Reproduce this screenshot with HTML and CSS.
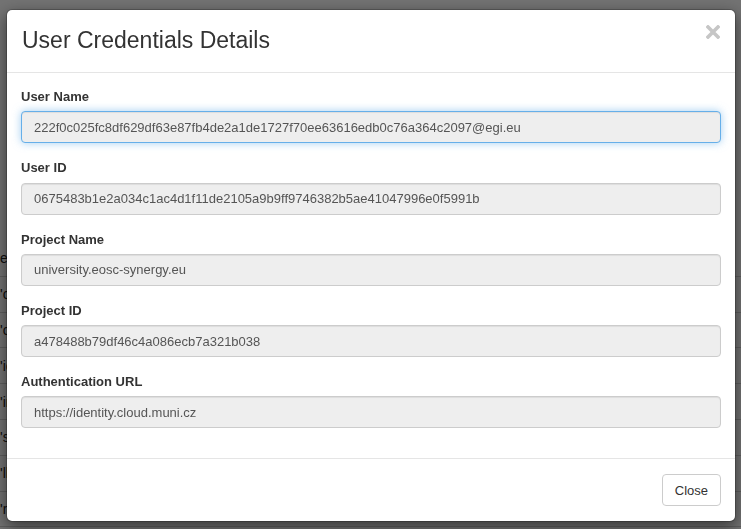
FILE: index.html
```html
<!DOCTYPE html>
<html>
<head>
<meta charset="utf-8">
<link rel="stylesheet" href="styles.css">
</head>
<body>
<div class="page">
  <div class="row"><span class="cell">ex</span></div>
  <div class="row"><span class="cell">'co</span></div>
  <div class="row"><span class="cell">'co</span></div>
  <div class="row"><span class="cell">'ic</span></div>
  <div class="row"><span class="cell">'in</span></div>
  <div class="row"><span class="cell">'st</span></div>
  <div class="row"><span class="cell">'ll</span></div>
  <div class="row"><span class="cell">'ro</span></div>
</div>
<div class="backdrop"></div>
<div class="modal">
  <div class="modal-header">
    <h4 class="modal-title">User Credentials Details</h4>
    <button class="close" type="button" aria-label="Close">
      <svg width="14" height="14" viewBox="0 0 14 14"><path d="M2 2 L12 12 M12 2 L2 12" stroke="#c6c6c6" stroke-width="3.6" stroke-linecap="square" fill="none"/></svg>
    </button>
  </div>
  <div class="modal-body">
    <div class="form-group">
      <label class="label">User Name</label>
      <input class="form-control focused" readonly value="222f0c025fc8df629df63e87fb4de2a1de1727f70ee63616edb0c76a364c2097@egi.eu">
    </div>
    <div class="form-group">
      <label class="label">User ID</label>
      <input class="form-control" readonly value="0675483b1e2a034c1ac4d1f11de2105a9b9ff9746382b5ae41047996e0f5991b">
    </div>
    <div class="form-group">
      <label class="label">Project Name</label>
      <input class="form-control" readonly value="university.eosc-synergy.eu">
    </div>
    <div class="form-group">
      <label class="label">Project ID</label>
      <input class="form-control" readonly value="a478488b79df46c4a086ecb7a321b038">
    </div>
    <div class="form-group">
      <label class="label">Authentication URL</label>
      <input class="form-control" readonly value="https://identity.cloud.muni.cz">
    </div>
  </div>
  <div class="modal-footer">
    <button class="btn" type="button">Close</button>
  </div>
</div>
</body>
</html>
```

FILE: styles.css
```css
* { box-sizing: border-box; }
html, body { margin: 0; padding: 0; }
body {
  width: 741px;
  height: 529px;
  overflow: hidden;
  background: #fff;
  font-family: "Liberation Sans", Arial, sans-serif;
  font-size: 13px;
  color: #333;
}
.page {
  padding-top: 241px;
}
.row {
  height: 35.8px;
  border-bottom: 1px solid #d2d2d2;
  display: flex;
  align-items: center;
}
.cell {
  font-size: 14px;
  color: #222;
}
.backdrop {
  position: fixed;
  inset: 0;
  background: rgba(0, 0, 0, 0.55);
}
.modal {
  position: absolute;
  left: 6px;
  top: 9px;
  width: 730px;
  background: #fff;
  border: 1px solid rgba(0, 0, 0, 0.2);
  border-radius: 6px;
  box-shadow: 0 5px 15px rgba(0, 0, 0, 0.5);
  background-clip: padding-box;
}
.modal-header {
  display: flex;
  justify-content: space-between;
  align-items: flex-start;
  padding: 14px 14px 16px 15px;
  border-bottom: 1px solid #e5e5e5;
}
.modal-title {
  margin: 0;
  font-size: 23px;
  font-weight: normal;
  line-height: 32px;
  color: #333;
}
.close {
  border: 0;
  background: none;
  padding: 0;
  margin: 1px 1px 0 0;
  width: 14px;
  height: 14px;
  display: flex;
  cursor: pointer;
}
.modal-body {
  padding: 14px 14px 15px 14px;
}
.form-group {
  display: flex;
  flex-direction: column;
  margin-bottom: 15px;
}
.label {
  font-weight: bold;
  font-size: 13px;
  line-height: 19.25px;
  margin-bottom: 5px;
  color: #333;
}
.form-control {
  height: 32px;
  padding: 0 12px;
  font-family: "Liberation Sans", Arial, sans-serif;
  font-size: 13px;
  color: #555;
  background: #eee;
  border: 1px solid #ccc;
  border-radius: 4px;
  box-shadow: inset 0 1px 1px rgba(0, 0, 0, 0.075);
  outline: none;
  width: 100%;
}
.form-control.focused {
  border-color: #66afe9;
  box-shadow: inset 0 1px 1px rgba(0, 0, 0, 0.075), 0 0 8px rgba(102, 175, 233, 0.6);
}
.modal-footer {
  display: flex;
  justify-content: flex-end;
  padding: 15px 14px 15px 14px;
  border-top: 1px solid #e5e5e5;
}
.btn {
  height: 32px;
  padding: 0 12px;
  font-family: "Liberation Sans", Arial, sans-serif;
  font-size: 13px;
  color: #333;
  background: #fff;
  border: 1px solid #ccc;
  border-radius: 4px;
  cursor: pointer;
}
```
